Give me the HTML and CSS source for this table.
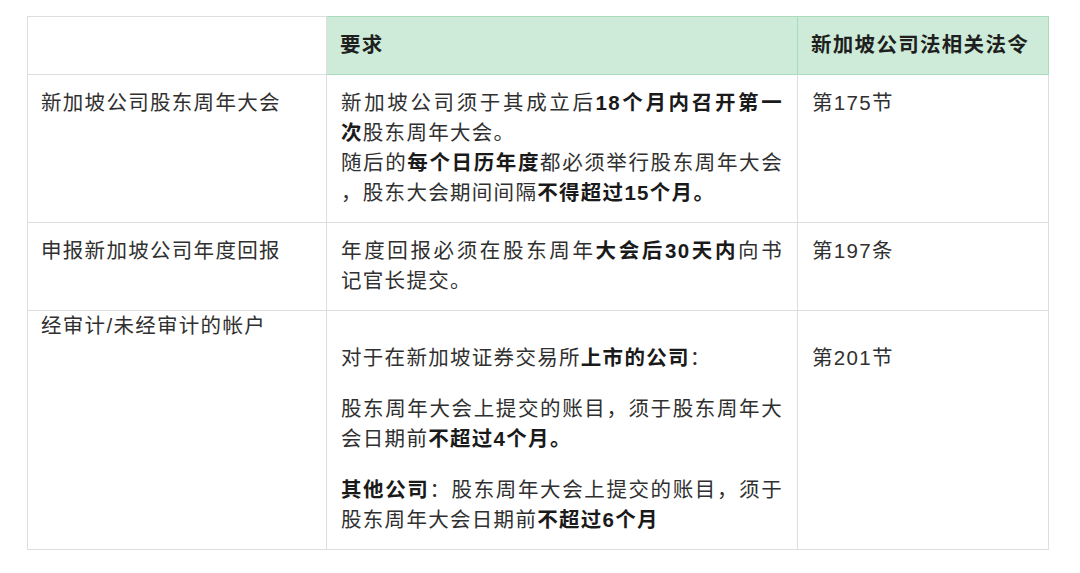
FILE: index.html
```html
<!DOCTYPE html>
<html lang="zh-CN">
<head>
<meta charset="utf-8">
<title>新加坡公司法</title>
<link rel="stylesheet" href="styles.css">
</head>
<body>
<div class="page">
  <table class="law">
    <thead>
      <tr>
        <th class="blank"></th>
        <th class="green">要求</th>
        <th class="green">新加坡公司法相关法令</th>
      </tr>
    </thead>
    <tbody>
      <tr>
        <td class="c1">新加坡公司股东周年大会</td>
        <td class="c2">
          <span class="jl">新加坡公司须于其成立后<b>18个月内召开第一</b></span>
          <span class="ln"><b>次</b>股东周年大会。</span>
          <span class="jl">随后的<b>每个日历年度</b>都必须举行股东周年大会</span>
          <span class="ln">，股东大会期间间隔<b>不得超过15个月。</b></span>
        </td>
        <td class="c3">第175节</td>
      </tr>
      <tr>
        <td class="c1">申报新加坡公司年度回报</td>
        <td class="c2">
          <span class="jl">年度回报必须在股东周年<b>大会后30天内</b>向书</span>
          <span class="ln">记官长提交。</span>
        </td>
        <td class="c3">第197条</td>
      </tr>
      <tr>
        <td class="c1 tight">经审计/未经审计的帐户</td>
        <td class="c2">
          <p class="para first">对于在新加坡证券交易所<b>上市的公司</b>：</p>
          <p class="para">
            <span class="jl">股东周年大会上提交的账目，须于股东周年大</span>
            <span class="ln">会日期前<b>不超过4个月。</b></span>
          </p>
          <p class="para">
            <span class="jl"><b>其他公司</b>：股东周年大会上提交的账目，须于</span>
            <span class="ln">股东周年大会日期前<b>不超过6个月</b></span>
          </p>
        </td>
        <td class="c3"><p class="para first">第201节</p></td>
      </tr>
    </tbody>
  </table>
</div>
</body>
</html>
```

FILE: styles.css
```css
* { box-sizing: border-box; }
html, body { margin: 0; padding: 0; background: #ffffff; }
body {
  font-family: "Liberation Sans", "Noto Sans CJK SC", sans-serif;
  color: #303030;
  font-size: 20.5px;
  line-height: 30px;
  letter-spacing: 1.3px;
}
.page {
  padding: 16px 32px 0 27px;
}
.law {
  width: 1022px;
  border-collapse: collapse;
  table-layout: fixed;
}
.law th, .law td {
  border: 1.5px solid #dedede;
  padding: 13px 13px 14px 13px;
  text-align: left;
  vertical-align: top;
}
.law th {
  font-weight: 700;
  color: #1f1f1f;
}
.law th.blank { width: 299px; }
.law th.green {
  background: #cdebd8;
  border-color: #aadcbb;
}
.law th.green:nth-child(2) { width: 471px; }
.law td.c1 { padding-left: 13px; }
.law td.c2 { padding-left: 14px; padding-right: 14px; }
.law td.c3 { padding-left: 14px; }
.law td.tight { padding-top: 0; }
b { font-weight: 700; color: #1a1a1a; }
.jl {
  display: block;
  text-align: justify;
  text-align-last: justify;
  white-space: nowrap;
}
.ln {
  display: block;
  white-space: nowrap;
}
.para { margin: 21px 0 0 0; }
.para.first { margin-top: 19px; }
```
